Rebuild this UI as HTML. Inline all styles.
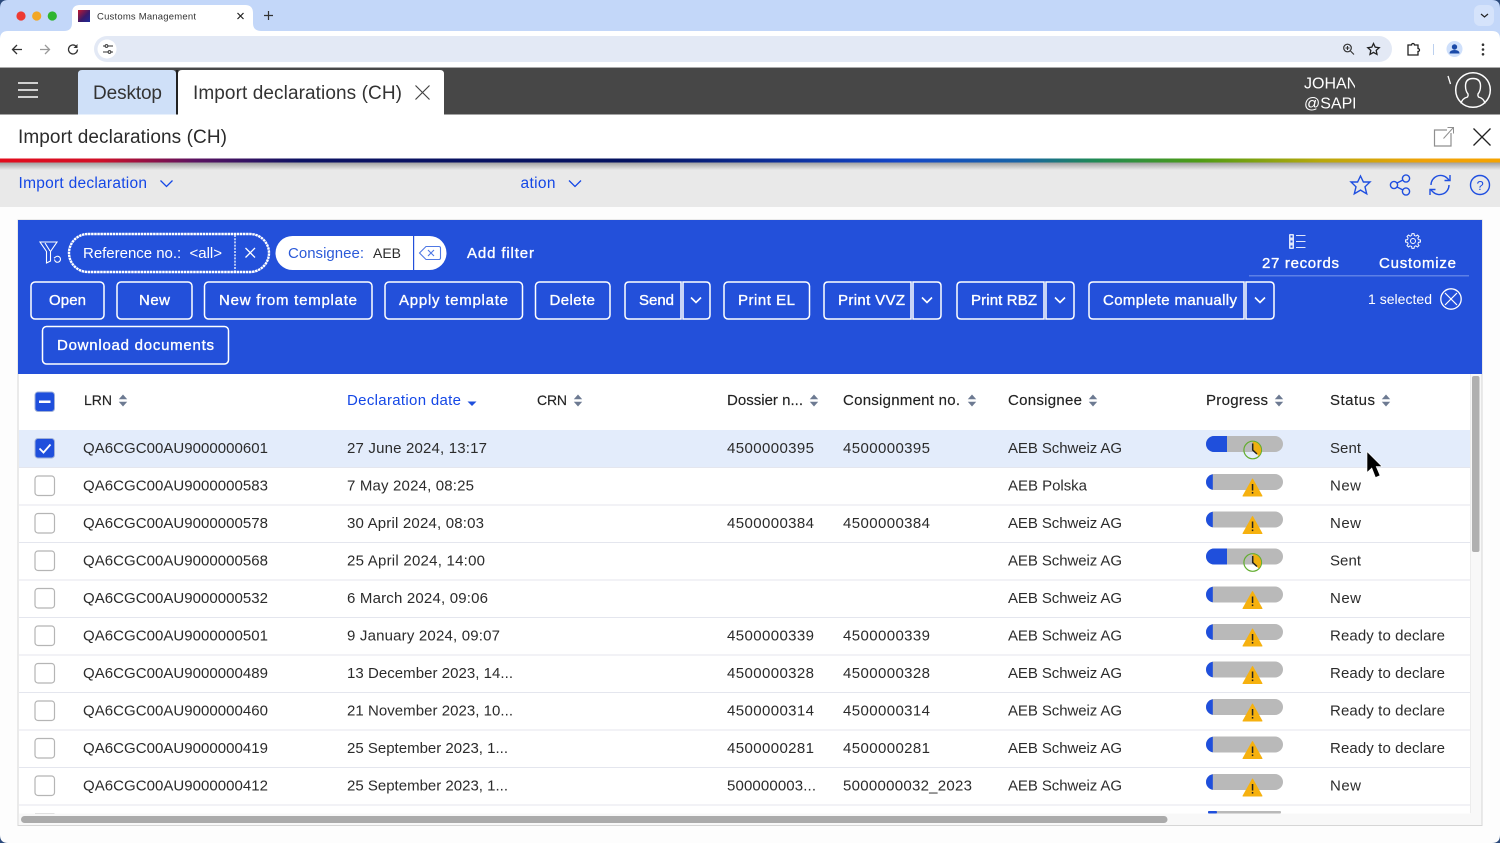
<!DOCTYPE html>
<html lang="en"><head><meta charset="utf-8"><title>Customs Management</title>
<style>
html,body{margin:0;padding:0;width:1500px;height:843px;overflow:hidden;background:#fdfdfd}
svg{display:block;font-family:"Liberation Sans",sans-serif}
text{white-space:pre}
.t{font-size:15px;fill:#2b2b2b}
.h{font-size:15px;fill:#222;stroke:#222;stroke-width:.15}
.b{font-size:15px;fill:#fff;stroke:#fff;stroke-width:.35}
.w{font-size:15px;fill:#fff}
.l{fill:none;stroke:#1f4fe0;stroke-width:1.4}
</style></head><body>
<svg width="1500" height="843" viewBox="0 0 1500 843" xmlns="http://www.w3.org/2000/svg">
<defs>
<linearGradient id="rb" x1="0" x2="1" y1="0" y2="0">
<stop offset="0" stop-color="#e30c1c"/><stop offset=".065" stop-color="#d20f26"/><stop offset=".13" stop-color="#5b1260"/><stop offset=".2" stop-color="#0c1263"/><stop offset=".42" stop-color="#04125f"/><stop offset=".6" stop-color="#1345c8"/><stop offset=".68" stop-color="#1763a6"/><stop offset=".73" stop-color="#1f8a55"/><stop offset=".8" stop-color="#4e9c14"/><stop offset=".88" stop-color="#b8a80c"/><stop offset=".95" stop-color="#f0a208"/><stop offset="1" stop-color="#f5a300"/>
</linearGradient>
<linearGradient id="sh" x1="0" x2="0" y1="0" y2="1"><stop offset="0" stop-color="#9c9c9c"/><stop offset="1" stop-color="#e9e9e9"/></linearGradient>
<linearGradient id="fv" x1="0" x2="1" y1="0" y2="1"><stop offset="0" stop-color="#c2182f"/><stop offset=".55" stop-color="#3a1a6a"/><stop offset="1" stop-color="#1b2a9a"/></linearGradient>
<g id="s"><path d="M0-6 4.200-1.200H-4.200Z M0 6 4.200 1.200H-4.200Z" fill="#6d7a92"/></g>
<g id="cb"><rect x="35" y="-10" width="19.500" height="19.500" rx="3" fill="#fff" stroke="#b5b5b5" stroke-width="1.200"/></g>
<g id="warn"><path d="M1252.500 479 1262 496H1243Z" fill="#f6b10f" stroke="#f6b10f" stroke-linejoin="round"/><rect x="1251.800" y="484" width="1.500" height="6.500" fill="#222"/><rect x="1251.800" y="492" width="1.500" height="1.600" fill="#222"/></g>
<g id="pw"><rect x="1206" y="474" width="77" height="16" rx="8" fill="#b9b9b9"/><path d="M1212.800 474.200A8 8 0 0 0 1206 482 8 8 0 0 0 1212.800 489.800Z" fill="#1f4fdc"/><use href="#warn"/></g>
<g id="ps"><rect x="1206" y="436" width="77" height="16" rx="8" fill="#b9b9b9"/><path d="M1227 436h-13a8 8 0 0 0 0 16h13Z" fill="#1f4fdc"/><circle cx="1252.700" cy="450" r="8.800" fill="none" stroke="#62ad2f" stroke-width="1.200"/><path d="M1252.700 450V441.600A8.400 8.400 0 0 1 1258.600 456Z" fill="#efb00f"/><path d="M1252.700 443.500V450L1257 454" fill="none" stroke="#222" stroke-width="1.500"/></g>
<path id="chev" d="M-5-2.500 0 2.500 5-2.500" fill="none" stroke="#fff" stroke-width="1.600"/>
<path id="gt" d="M-1.360-5.430L-1.040-7.430H1.040L1.360-5.430A5.600 5.600 0 0 1 2.880-4.800" fill="none" stroke="#fff" stroke-width="1"/>
</defs>

<!-- browser chrome -->
<rect width="1500" height="68" fill="#fff"/>
<rect width="1500" height="31" fill="#c3d7f9"/>
<path d="M0 8Q0 0 8 0H0Z" fill="#2b4a7c"/><path d="M1500 8Q1500 0 1492 0H1500Z" fill="#2b4a7c"/>
<path d="M64 31Q72 31 72 23V13Q72 5 80 5H245Q253 5 253 13V23Q253 31 261 31Z" fill="#fff"/>
<circle cx="21" cy="16" r="4.600" fill="#ee3a33"/><circle cx="36.700" cy="16" r="4.600" fill="#f2a726"/><circle cx="52.300" cy="16" r="4.600" fill="#2fb52f"/>
<rect x="78" y="10" width="12" height="12" fill="url(#fv)"/>
<text x="97" y="19.500" font-size="9.500" fill="#333" textLength="99">Customs Management</text>
<path d="M237.500 13l6 6M243.500 13l-6 6" stroke="#222" stroke-width="1.200"/>
<path d="M264 15.500h9M268.500 11v9" stroke="#333" stroke-width="1.200"/>
<rect x="1474" y="5" width="20" height="21" rx="6" fill="#d5e3fb"/><path d="M1481 14l3.500 3 3.500-3" fill="none" stroke="#222" stroke-width="1.200"/>
<path d="M0 39Q0 31 8 31H1492Q1500 31 1500 39V31H0Z" fill="#c3d7f9"/>
<rect x="94" y="36" width="1298" height="26" rx="13" fill="#e3e9f5"/>
<circle cx="107" cy="49" r="9.500" fill="#fff"/>
<path d="M103 46h2M108 46h5M103 52h5M111 52h2" stroke="#333" stroke-width="1"/><circle cx="106.500" cy="46" r="1.400" fill="none" stroke="#333"/><circle cx="109.500" cy="52" r="1.400" fill="none" stroke="#333"/>
<path d="M22 49.500H13M17 45l-4.500 4.500 4.500 4.500" fill="none" stroke="#333" stroke-width="1.300"/>
<path d="M40 49.500h9M45 45l4.500 4.500-4.500 4.500" fill="none" stroke="#9a9a9a" stroke-width="1.300"/>
<path d="M77.500 49.500a4.500 4.500 0 1 1-1.500-3.400" fill="none" stroke="#333" stroke-width="1.300"/><path d="M77.500 44v4h-4Z" fill="#333"/>
<circle cx="1347.500" cy="48" r="3.800" fill="none" stroke="#333" stroke-width="1.200"/><path d="M1350.500 51l3.500 3.500M1345.500 48h4M1347.500 46v4" stroke="#333" stroke-width="1.100"/>
<path d="M1373.500 43.500l1.700 3.700 4 .5-3 2.700.8 4-3.500-2-3.500 2 .8-4-3-2.700 4-.5Z" fill="none" stroke="#222" stroke-width="1.300"/>
<path d="M1408 45h3.500a1.500 1.500 0 0 1 3 0h3.500v3.500a1.500 1.500 0 0 1 0 3V55h-10Z" fill="none" stroke="#222" stroke-width="1.300"/>
<rect x="1433" y="44" width="1" height="11" fill="#bcd0ee"/>
<circle cx="1454.500" cy="49" r="8" fill="#cfe0fb"/><circle cx="1454.500" cy="47" r="2.700" fill="#1a4aa8"/><path d="M1449.500 53.500q0-3.500 5-3.500t5 3.500Z" fill="#1a4aa8"/>
<circle cx="1483" cy="44.700" r="1.300" fill="#333"/><circle cx="1483" cy="49.500" r="1.300" fill="#333"/><circle cx="1483" cy="54.300" r="1.300" fill="#333"/>

<!-- app bar -->
<rect y="67" width="1500" height="1.500" fill="#aaa"/>
<rect y="68" width="1500" height="46.500" fill="#474747"/>
<path d="M18 83h20M18 90h20M18 97h20" stroke="#fff" stroke-width="1.600"/>
<path d="M78 114.500V74q0-4 4-4H172q4 0 4 4V114.500Z" fill="#cfe0f8"/>
<path d="M178 114.500V74q0-4 4-4H440q4 0 4 4V114.500Z" fill="#fff"/>
<rect x="176" y="70" width="2" height="45" fill="#222"/>
<text x="93" y="99" font-size="19" fill="#333" textLength="69">Desktop</text>
<text x="193" y="99" font-size="19" fill="#333" textLength="209">Import declarations (CH)</text>
<path d="M415.500 85.500l14 14M429.500 85.500l-14 14" stroke="#444" stroke-width="1.200"/>
<svg x="1304" y="70" width="51" height="44"><text x="0" y="18.500" font-size="16" fill="#fff">JOHANN</text><text x="0" y="38.500" font-size="16" fill="#fff">@SAPDE</text></svg>
<path d="M1448 76l2.500 8" stroke="#fff" stroke-width="1.300"/>
<circle cx="1473" cy="90" r="17.300" fill="#474747" stroke="#fff" stroke-width="1.500"/>
<path d="M1461 103.500q1-5 6.500-6.500 1-1.500.5-3-2.500-3-2.500-8 0-7.500 7.500-7.500t7.500 7.500q0 5-2.500 8-.5 1.500.5 3 5.500 1.500 6.500 6.500" fill="none" stroke="#fff" stroke-width="1.400"/>

<!-- title -->
<rect y="114.500" width="1500" height="44" fill="#fff"/>
<text x="18" y="143" font-size="19" fill="#2b2b2b" textLength="209">Import declarations (CH)</text>
<path d="M1451 133v13h-16.500v-16H1447" fill="none" stroke="#8f8f8f" stroke-width="1.200"/><path d="M1443.500 138.500l9.500-10.500M1447.500 127.500h6v6" fill="none" stroke="#8f8f8f" stroke-width="1"/>
<path d="M1473.500 128.500l17 17M1490.500 128.500l-17 17" stroke="#222" stroke-width="1.300"/>
<rect y="162" width="1500" height="45" fill="#e9e9e9"/>
<rect y="162" width="1500" height="8" fill="url(#sh)"/>
<rect y="158.500" width="1500" height="4" fill="url(#rb)"/>
<text x="18.500" y="188" font-size="15.500" fill="#1447e6" textLength="128.500">Import declaration</text>
<path d="M160.500 180.500l6 6 6-6" fill="none" stroke="#1447e6" stroke-width="1.300"/>
<text x="520.500" y="188" font-size="15.500" fill="#1447e6" textLength="35">ation</text>
<path d="M569 180.500l6 6 6-6" fill="none" stroke="#1447e6" stroke-width="1.300"/>
<path class="l" d="M1360.500 176l2.900 6h6.600l-5 4.800 1.700 7-6.200-3.700-6.200 3.700 1.700-7-5-4.800h6.600Z"/>
<g class="l"><circle cx="1394" cy="185" r="3.600"/><circle cx="1406" cy="178.500" r="3.600"/><circle cx="1406" cy="191.500" r="3.600"/><path d="M1397 183l6-3M1397 187l6 3"/></g>
<g class="l"><path d="M1431 185a9.500 9.500 0 0 1 16-7l2 2"/><path d="M1449 185a9.500 9.500 0 0 1-16 7l-2-2"/><path d="M1450 175v5.500h-5.500M1430 195v-5.500h5.500"/></g>
<circle class="l" cx="1480" cy="185" r="9.500"/><text x="1476.500" y="190" font-size="13" fill="#1f4fe0">?</text>

<!-- panel -->
<rect x="18" y="220" width="1464" height="605.500" fill="#fff" stroke="#d6d6d6"/>
<rect x="18" y="220" width="1464" height="154" fill="#2350da"/>
<g fill="none" stroke="#fff" stroke-width="1.100"><path d="M40 242h17l-6.500 9.500V261l-4 2V251.500Z"/><path d="M45 243l5 8"/><path d="M54.500 259.500a3 3 0 1 0 1-2.500l-1.500 1.200"/></g>
<rect x="69" y="234" width="200" height="38" rx="19" fill="#2350da" stroke="#fff" stroke-width="2.400" stroke-dasharray="2.500 .6"/>
<path d="M235 235v36" stroke="#fff" stroke-width="1.300" stroke-dasharray="2 1.200"/>
<text class="w" x="83" y="258" textLength="139">Reference no.:  &lt;all&gt;</text>
<path d="M245.500 248l9.500 9.500M255 248l-9.500 9.500" stroke="#fff" stroke-width="1.300"/>
<rect x="275.500" y="236" width="171" height="34" rx="17" fill="#fff"/>
<text x="288" y="258" font-size="15" fill="#2b5ad8" textLength="76">Consignee:</text>
<text x="373" y="258" font-size="14" fill="#2b2b2b" textLength="28">AEB</text>
<rect x="413" y="236" width="1.200" height="34" fill="#2350da"/>
<path d="M426 246.500h13a1.500 1.500 0 0 1 1.500 1.500v10a1.500 1.500 0 0 1-1.500 1.500h-13l-6.500-6.500Z" fill="none" stroke="#4f78e4" stroke-width="1.100"/><path d="M428 250l6 6M434 250l-6 6" stroke="#4f78e4" stroke-width="1.100"/>
<text class="b" x="467" y="258" textLength="67">Add filter</text>

<g fill="none" stroke="#fff" stroke-width="1.500">
<rect x="31" y="282" width="73" height="37" rx="4"/>
<rect x="117" y="282" width="75" height="37" rx="4"/>
<rect x="204.500" y="282" width="167.500" height="37" rx="4"/>
<rect x="385" y="282" width="137.500" height="37" rx="4"/>
<rect x="535.500" y="282" width="74.500" height="37" rx="4"/>
<path d="M681 282h-52q-4 0-4 4v29q0 4 4 4h52Z"/><path d="M683 282h23q4 0 4 4v29q0 4-4 4h-23Z"/>
<rect x="724" y="282" width="85.500" height="37" rx="4"/>
<path d="M911 282h-83q-4 0-4 4v29q0 4 4 4h83Z"/><path d="M913 282h24q4 0 4 4v29q0 4-4 4h-24Z"/>
<path d="M1044 282h-83q-4 0-4 4v29q0 4 4 4h83Z"/><path d="M1046 282h24q4 0 4 4v29q0 4-4 4h-24Z"/>
<path d="M1244 282h-151q-4 0-4 4v29q0 4 4 4h151Z"/><path d="M1246 282h24q4 0 4 4v29q0 4-4 4h-24Z"/>
<rect x="42.500" y="326.500" width="186" height="37.500" rx="4"/>
</g>
<text class="b" x="49" y="305" textLength="37">Open</text>
<text class="b" x="139" y="305" textLength="31">New</text>
<text class="b" x="219" y="305" textLength="138">New from template</text>
<text class="b" x="399" y="305" textLength="109">Apply template</text>
<text class="b" x="549.500" y="305" textLength="45.500">Delete</text>
<text class="b" x="639" y="305" textLength="35">Send</text>
<text class="b" x="738" y="305" textLength="57">Print EL</text>
<text class="b" x="838" y="305" textLength="67">Print VVZ</text>
<text class="b" x="971" y="305" textLength="66">Print RBZ</text>
<text class="b" x="1103" y="305" textLength="134">Complete manually</text>
<text class="b" x="57" y="350" textLength="157">Download documents</text>
<use href="#chev" x="696" y="300"/><use href="#chev" x="927" y="300"/><use href="#chev" x="1060" y="300"/><use href="#chev" x="1260" y="300"/>

<rect x="1289" y="234" width="5" height="15" rx="1" fill="#dfe6fb"/>
<g fill="#2350da"><rect x="1290.500" y="235.500" width="2" height="2"/><rect x="1290.500" y="240.500" width="2" height="2"/><rect x="1290.500" y="245.500" width="2" height="2"/></g>
<path d="M1296 235.500h9.500M1296 241.500h9.500M1296 247.500h9.500" stroke="#dfe6fb" stroke-width="1"/>
<g transform="translate(1413 241)"><circle r="2.500" fill="none" stroke="#fff"/><use href="#gt"/><use href="#gt" transform="rotate(45)"/><use href="#gt" transform="rotate(90)"/><use href="#gt" transform="rotate(135)"/><use href="#gt" transform="rotate(180)"/><use href="#gt" transform="rotate(225)"/><use href="#gt" transform="rotate(270)"/><use href="#gt" transform="rotate(315)"/></g>
<text class="b" x="1262" y="268" textLength="77">27 records</text>
<text class="b" x="1379" y="268" textLength="77">Customize</text>
<rect x="1249" y="275" width="220" height="1.500" fill="#5c7fe6"/>
<text x="1368" y="304" font-size="14" fill="#fff" textLength="64">1 selected</text>
<circle cx="1451" cy="299" r="10.200" fill="none" stroke="#fff" stroke-width="1.300"/><path d="M1445 293l12 12M1457 293l-12 12" stroke="#fff" stroke-width="1.200"/>

<!-- table header -->
<rect x="35" y="392" width="19.500" height="19.500" rx="3" fill="#1f4fdc" stroke="#9fb0d8"/><rect x="39" y="400.500" width="11.500" height="2.500" fill="#fff"/>
<text class="h" x="84" y="405" font-size="14" style="font-size:14px" textLength="28">LRN</text><use href="#s" x="123" y="400.500"/>
<text x="347" y="405" font-size="15" fill="#1447e6" textLength="114">Declaration date</text><path d="M467.500 401.500h9l-4.500 4.500Z" fill="#1f4fdc"/>
<text class="h" x="537" y="405" style="font-size:14px" textLength="30">CRN</text><use href="#s" x="578" y="400.500"/>
<text class="h" x="727" y="405" textLength="76">Dossier n...</text><use href="#s" x="814" y="400.500"/>
<text class="h" x="843" y="405" textLength="117">Consignment no.</text><use href="#s" x="972" y="400.500"/>
<text class="h" x="1008" y="405" textLength="74">Consignee</text><use href="#s" x="1093" y="400.500"/>
<text class="h" x="1206" y="405" textLength="62">Progress</text><use href="#s" x="1279" y="400.500"/>
<text class="h" x="1330" y="405" textLength="45">Status</text><use href="#s" x="1386" y="400.500"/>

<!-- rows -->
<rect x="19" y="430" width="1451" height="37.500" fill="#e3ecfb"/>
<g fill="#e4e6ee"><rect x="19" y="467" width="1451" height="1"/><rect x="19" y="504.500" width="1451" height="1"/><rect x="19" y="542" width="1451" height="1"/><rect x="19" y="579.500" width="1451" height="1"/><rect x="19" y="617" width="1451" height="1"/><rect x="19" y="654.500" width="1451" height="1"/><rect x="19" y="692" width="1451" height="1"/><rect x="19" y="729.500" width="1451" height="1"/><rect x="19" y="767" width="1451" height="1"/><rect x="19" y="804.500" width="1451" height="1"/></g>

<rect x="35" y="438.500" width="19.500" height="19.500" rx="3" fill="#1f4fdc" stroke="#9fb0d8"/><path d="M39.500 448.500l4 4 7-8" fill="none" stroke="#fff" stroke-width="1.800"/>
<use href="#cb" y="486"/><use href="#cb" y="523.500"/><use href="#cb" y="561"/><use href="#cb" y="598.500"/><use href="#cb" y="636"/><use href="#cb" y="673.500"/><use href="#cb" y="711"/><use href="#cb" y="748.500"/><use href="#cb" y="786"/>

<use href="#ps"/><use href="#pw"/><use href="#pw" y="37.500"/><use href="#ps" y="112.500"/><use href="#pw" y="112.500"/><use href="#pw" y="150"/><use href="#pw" y="187.500"/><use href="#pw" y="225"/><use href="#pw" y="262.500"/><use href="#pw" y="300"/>

<g><text class="t" x="83" y="453" textLength="185">QA6CGC00AU9000000601</text><text class="t" x="347" y="453" textLength="140">27 June 2024, 13:17</text><text class="t" x="727" y="453" textLength="87">4500000395</text><text class="t" x="843" y="453" textLength="87">4500000395</text><text class="t" x="1008" y="453" textLength="114">AEB Schweiz AG</text><text class="t" x="1330" y="453" textLength="31">Sent</text></g>
<g><text class="t" x="83" y="490.500" textLength="185">QA6CGC00AU9000000583</text><text class="t" x="347" y="490.500" textLength="127">7 May 2024, 08:25</text><text class="t" x="1008" y="490.500" textLength="79">AEB Polska</text><text class="t" x="1330" y="490.500" textLength="31">New</text></g>
<g><text class="t" x="83" y="528" textLength="185">QA6CGC00AU9000000578</text><text class="t" x="347" y="528" textLength="137">30 April 2024, 08:03</text><text class="t" x="727" y="528" textLength="87">4500000384</text><text class="t" x="843" y="528" textLength="87">4500000384</text><text class="t" x="1008" y="528" textLength="114">AEB Schweiz AG</text><text class="t" x="1330" y="528" textLength="31">New</text></g>
<g><text class="t" x="83" y="565.500" textLength="185">QA6CGC00AU9000000568</text><text class="t" x="347" y="565.500" textLength="138">25 April 2024, 14:00</text><text class="t" x="1008" y="565.500" textLength="114">AEB Schweiz AG</text><text class="t" x="1330" y="565.500" textLength="31">Sent</text></g>
<g><text class="t" x="83" y="603" textLength="185">QA6CGC00AU9000000532</text><text class="t" x="347" y="603" textLength="141">6 March 2024, 09:06</text><text class="t" x="1008" y="603" textLength="114">AEB Schweiz AG</text><text class="t" x="1330" y="603" textLength="31">New</text></g>
<g><text class="t" x="83" y="640.500" textLength="185">QA6CGC00AU9000000501</text><text class="t" x="347" y="640.500" textLength="153">9 January 2024, 09:07</text><text class="t" x="727" y="640.500" textLength="87">4500000339</text><text class="t" x="843" y="640.500" textLength="87">4500000339</text><text class="t" x="1008" y="640.500" textLength="114">AEB Schweiz AG</text><text class="t" x="1330" y="640.500" textLength="115">Ready to declare</text></g>
<g><text class="t" x="83" y="678" textLength="185">QA6CGC00AU9000000489</text><text class="t" x="347" y="678" textLength="166">13 December 2023, 14...</text><text class="t" x="727" y="678" textLength="87">4500000328</text><text class="t" x="843" y="678" textLength="87">4500000328</text><text class="t" x="1008" y="678" textLength="114">AEB Schweiz AG</text><text class="t" x="1330" y="678" textLength="115">Ready to declare</text></g>
<g><text class="t" x="83" y="715.500" textLength="185">QA6CGC00AU9000000460</text><text class="t" x="347" y="715.500" textLength="166">21 November 2023, 10...</text><text class="t" x="727" y="715.500" textLength="87">4500000314</text><text class="t" x="843" y="715.500" textLength="87">4500000314</text><text class="t" x="1008" y="715.500" textLength="114">AEB Schweiz AG</text><text class="t" x="1330" y="715.500" textLength="115">Ready to declare</text></g>
<g><text class="t" x="83" y="753" textLength="185">QA6CGC00AU9000000419</text><text class="t" x="347" y="753" textLength="161">25 September 2023, 1...</text><text class="t" x="727" y="753" textLength="87">4500000281</text><text class="t" x="843" y="753" textLength="87">4500000281</text><text class="t" x="1008" y="753" textLength="114">AEB Schweiz AG</text><text class="t" x="1330" y="753" textLength="115">Ready to declare</text></g>
<g><text class="t" x="83" y="790.500" textLength="185">QA6CGC00AU9000000412</text><text class="t" x="347" y="790.500" textLength="161">25 September 2023, 1...</text><text class="t" x="727" y="790.500" textLength="89">500000003...</text><text class="t" x="843" y="790.500" textLength="129">5000000032_2023</text><text class="t" x="1008" y="790.500" textLength="114">AEB Schweiz AG</text><text class="t" x="1330" y="790.500" textLength="31">New</text></g>

<!-- next row peek -->
<rect x="35" y="813" width="19.500" height="1" fill="#c8c8c8"/>
<rect x="1208" y="811" width="73" height="2.500" rx="1" fill="#b9b9b9"/><rect x="1208" y="811" width="9" height="2.500" rx="1" fill="#1f4fdc"/>

<!-- scrollbars -->
<rect x="19" y="813.500" width="1462" height="11.500" fill="#f8f8f8"/>
<rect x="1470" y="374" width="11.500" height="450" fill="#f8f8f8"/>
<rect x="1470" y="374" width="1" height="439" fill="#ececec"/>
<rect x="1472" y="376" width="7.500" height="176" rx="2" fill="#b0b0b0"/>
<rect x="21" y="816" width="1146.500" height="7" rx="3.500" fill="#ababab"/>

<!-- cursor -->
<path d="M1367 451.500V472.500L1371.800 468 1375.500 477.500 1380 475.500 1376.200 466.500H1382Z" fill="#000" stroke="#fff" stroke-width=".6"/>
<path d="M0 835Q0 843 8 843H0Z" fill="#2b4a7c"/><path d="M1500 835Q1500 843 1492 843H1500Z" fill="#2b4a7c"/>
</svg>
</body></html>
